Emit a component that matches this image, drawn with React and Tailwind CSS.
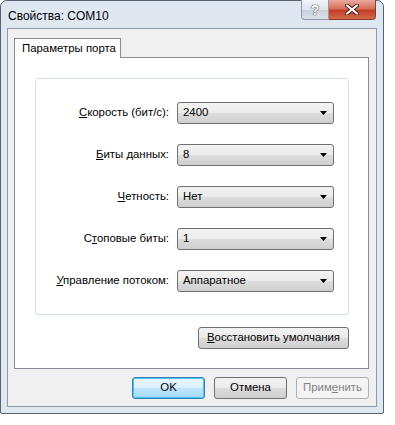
import React from 'react';

const font = { fontFamily: '"Liberation Sans", "Noto Sans", sans-serif' };

// Label with an underlined access key at position `at`
const AccessLabel = ({ text, at }) => (
  <span className="whitespace-nowrap">
    {text.slice(0, at)}
    <span className="underline underline-offset-[1px]">{text[at]}</span>
    {text.slice(at + 1)}
  </span>
);

const Combo = ({ value }) => (
  <div className="flex h-[22px] w-[157px] items-center justify-between rounded-[3px] border border-[#707070] bg-[linear-gradient(to_bottom,#f3f3f3_0%,#ebebeb_50%,#dddddd_51%,#cfcfcf_100%)] pl-[5px] pr-[6px] text-[11.4px] text-black">
    <span>{value}</span>
    <svg width="7" height="4" viewBox="0 0 7 4">
      <path d="M0 0 H7 L3.5 4 Z" fill="#000" />
    </svg>
  </div>
);

const rows = [
  { label: 'Скорость (бит/с):', at: 0, value: '2400' },
  { label: 'Биты данных:', at: 0, value: '8' },
  { label: 'Четность:', at: 0, value: 'Нет' },
  { label: 'Стоповые биты:', at: 1, value: '1' },
  { label: 'Управление потоком:', at: 0, value: 'Аппаратное' },
];

const Button = ({ children, kind = 'normal', className = '' }) => {
  const styles = {
    normal: 'border-[#707070] bg-[linear-gradient(to_bottom,#f2f2f2_0%,#ebebeb_50%,#dddddd_51%,#cfcfcf_100%)] text-black',
    default: 'border-[#3c7fb1] bg-[linear-gradient(to_bottom,#eaf6fd_0%,#d9f0fc_50%,#bee6fd_51%,#a7d9f5_100%)] text-black shadow-[inset_0_0_0_1px_#48c4f4]',
    disabled: 'border-[#adb2b5] bg-[#f4f4f4] text-[#838383]',
  };
  return (
    <div className={`flex h-[22px] items-center justify-center rounded-[3px] border text-[11.4px] ${styles[kind]} ${className}`}>
      {children}
    </div>
  );
};

export default function App() {
  return (
    <div className="h-[425px] w-[395px] bg-white" style={font}>
      <div className="flex h-[414px] w-[384px] flex-col rounded-t-[7px] rounded-b-[2px] border border-[#59636f] bg-[#dfe7f1]">
        {/* Title bar */}
        <div className="relative flex h-[27px] shrink-0 items-center pl-[7px] pt-[2px] text-[12px] text-black">
          Свойства: COM10
          <div className="absolute right-[7px] top-[-1px] flex h-[20px]">
            <div className="flex w-[28px] items-center justify-center rounded-bl-[4px] border border-t-0 border-[#8d99a8] bg-[linear-gradient(to_bottom,#f2f5f9_0%,#dde3ea_50%,#c8d0da_51%,#dbe2ea_100%)]">
              <span className="text-[14px] font-bold leading-none text-white [text-shadow:0_0_1px_#44505e,0_0_1px_#44505e,0_0_1px_#44505e]">?</span>
            </div>
            <div className="flex w-[47px] items-center justify-center rounded-br-[4px] border border-l-0 border-t-0 border-[#8a3a2e] bg-[linear-gradient(to_bottom,#e9a99c_0%,#d7705c_45%,#c23f26_55%,#d5684a_100%)]">
              <svg width="14" height="11" viewBox="0 0 14 11">
                <path d="M2 1.5 L12 9.5 M12 1.5 L2 9.5" stroke="#4a1a12" strokeWidth="4" strokeLinecap="round" />
                <path d="M2 1.5 L12 9.5 M12 1.5 L2 9.5" stroke="#fff" strokeWidth="2.2" strokeLinecap="round" />
              </svg>
            </div>
          </div>
        </div>

        {/* Client area */}
        <div className="mx-[6px] mb-[6px] flex flex-1 flex-col border border-[#8e9aa9] bg-[#f0f0f0] pt-[9px]">
          <div className="ml-[6px] flex">
            <div className="relative z-10 -mb-px flex h-[20px] w-[107px] items-center whitespace-nowrap border border-b-0 border-[#898c95] bg-white pl-[7px] pt-[1px] text-[11.4px] text-black">
              Параметры порта
            </div>
          </div>

          <div className="ml-[6px] mr-[7px] flex h-[312px] flex-col border border-[#898c95] bg-white pb-[19px] pl-[20px] pr-[19px] pt-[20px]">
            <div className="flex h-[237px] flex-col gap-[20px] rounded-[3px] border border-[#d5dfe5] pr-[14px] pt-[23px]">
              {rows.map((r) => (
                <div key={r.label} className="flex items-center justify-end gap-[8px] text-[11.4px] text-black">
                  <AccessLabel text={r.label} at={r.at} />
                  <Combo value={r.value} />
                </div>
              ))}
            </div>
            <div className="mt-[12px] flex justify-end">
              <Button className="w-[151px]">
                <AccessLabel text="Восстановить умолчания" at={0} />
              </Button>
            </div>
          </div>

          <div className="mr-[7px] mt-[8px] flex justify-end gap-[9px]">
            <Button kind="default" className="w-[73px]">OK</Button>
            <Button className="w-[73px]">Отмена</Button>
            <Button kind="disabled" className="w-[73px]">
              <AccessLabel text="Применить" at={4} />
            </Button>
          </div>
        </div>
      </div>
    </div>
  );
}
